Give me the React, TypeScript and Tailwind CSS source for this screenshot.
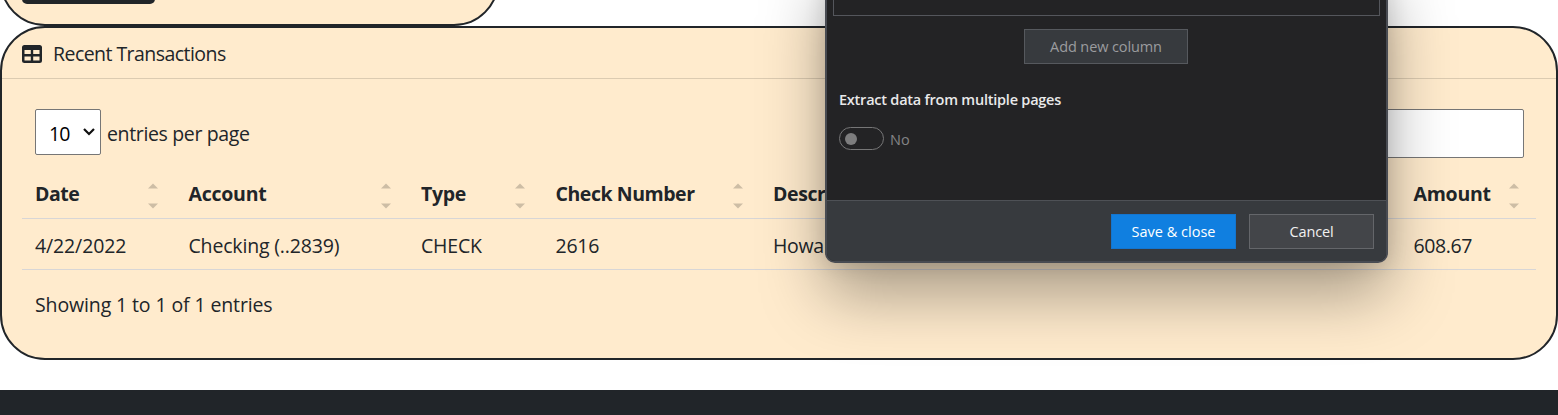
import React from 'react';

function SortIcon() {
  return (
    <svg width="10" height="26" viewBox="0 0 10 26" className="mt-[3px] shrink-0" fill="#cdbda5">
      <path d="M0 5.500 L5 0.500 L10 5.500 Z" />
      <path d="M0 20.500 L10 20.500 L5 25.500 Z" />
    </svg>
  );
}

const columns = [
  { title: 'Date', value: '4/22/2022', width: 'w-[153.5px]', cell: 'tracking-[-0.12px]', head: 'tracking-[-0.5px]' },
  { title: 'Account', value: 'Checking (..2839)', width: 'w-[232.5px]', cell: 'tracking-[-0.17px]', head: 'tracking-[-0.25px]' },
  { title: 'Type', value: 'CHECK', width: 'w-[134.5px]', cell: 'tracking-[-0.2px]', head: 'tracking-[-0.3px]' },
  { title: 'Check Number', value: '2616', width: 'w-[217.5px]', cell: 'tracking-[-0.25px]', head: 'tracking-[-0.45px]' },
  { title: 'Description', value: 'Howard', width: 'w-[640.5px]', cell: 'tracking-[-0.3px]', head: 'tracking-[-0.4px]' },
  { title: 'Amount', value: '608.67', width: 'w-[135.5px]', cell: 'tracking-[-0.4px]', head: 'tracking-[-0.25px]' },
];

function TransactionsTable() {
  return (
    <div className="mx-5 mt-[11px]">
      <div className="flex h-[50px] border-b border-[#d8d6d6] pt-px font-bold">
        {columns.map((c) => (
          <div key={c.title} className={`${c.width} flex shrink-0 items-center justify-between pr-[17.5px] pl-[13px]`}>
            <span className={c.head}>{c.title}</span>
            <SortIcon />
          </div>
        ))}
      </div>
      <div className="flex h-[51px] border-b border-[#d8d6d6] pt-[3px]">
        {columns.map((c) => (
          <div key={c.title} className={`${c.width} ${c.cell} flex shrink-0 items-center pl-[13px]`}>
            {c.value}
          </div>
        ))}
      </div>
    </div>
  );
}

function Dialog() {
  return (
    <section className="absolute -top-10 left-[825px] flex h-[303px] w-[563px] flex-col overflow-hidden rounded-[10px] border-2 border-[#484b52] bg-[#232325] font-['Open_Sans','Noto_Sans',sans-serif] text-[14.5px] shadow-[0_32px_64px_rgba(0,0,0,0.34),0_2px_21px_rgba(0,0,0,0.12)]">
      <div className="mx-[6px] h-[54px] shrink-0 border border-[#54565c]" />
      <button className="mt-[13px] ml-[197px] h-[35px] w-[164px] shrink-0 border border-[#56595e] bg-[#373a3e] tracking-[-0.1px] text-[#9b9c9e]">
        Add new column
      </button>
      <h3 className="mt-[26px] ml-3 leading-5 font-semibold tracking-[-0.23px] text-[#e9e9ea]">
        Extract data from multiple pages
      </h3>
      <div className="mt-4 ml-3 flex h-[25px] items-center gap-[6px] text-[#848485]">
        <span className="flex h-[23px] w-[45px] items-center rounded-full border border-[#767677] pl-[5px]">
          <span className="h-3 w-3 rounded-full bg-[#7d7d7e]" />
        </span>
        <span className="pt-[3px] leading-[22px]">No</span>
      </div>
      <footer className="mt-auto flex h-[61px] shrink-0 justify-end gap-[13px] border-t border-[#4e5156] bg-[#373a3e] pt-[13px] pr-3">
        <button className="h-[35px] w-[125px] border border-[#1475cf] bg-[#107fe0] text-white">Save &amp; close</button>
        <button className="h-[35px] w-[125px] border border-[#64666a] bg-[#434549] tracking-[-0.15px] text-[#f1f1f1]">Cancel</button>
      </footer>
    </section>
  );
}

export default function App() {
  return (
    <div className="relative flex h-[415px] w-full flex-col overflow-hidden bg-white font-['Open_Sans','Noto_Sans',sans-serif] text-[19.5px] text-[#212529]">
      <div className="-mt-[100px] flex h-[126px] w-[499px] shrink-0 items-end rounded-[45px] border-2 border-[#212529] bg-[#ffebcd] pb-5 pl-5">
        <div className="h-10 w-[133px] rounded-[5px] bg-[#212529]" />
      </div>
      <section className="h-[334px] shrink-0 overflow-hidden rounded-[45px] border-2 border-[#212529] bg-[#ffebcd]">
        <header className="flex h-[51px] items-center border-b border-[#dccbb1] pt-px pl-5">
          <svg width="20" height="18" viewBox="0 0 20 18" fillRule="evenodd" fill="#212529">
            <path d="M2.5 0h15A2.5 2.5 0 0 1 20 2.5v13a2.5 2.5 0 0 1-2.5 2.5h-15A2.5 2.5 0 0 1 0 15.500v-13A2.500 2.500 0 0 1 2.500 0ZM2.500 5v4h6.300V5ZM11.200 5v4h6.300V5ZM2.500 11.500v4h6.300v-4ZM11.200 11.500v4h6.300v-4Z" />
          </svg>
          <span className="ml-[11px] pt-px tracking-[-0.55px]">Recent Transactions</span>
        </header>
        <div className="flex items-start justify-between pt-[30px] pr-8 pl-[33px]">
          <div className="flex items-center">
            <div className="flex h-[46px] w-[66px] items-center rounded-[2px] border border-[#767676] bg-white pt-[4px] pl-[13px] tracking-[-0.8px] text-black">
              10
              <svg width="12" height="8" viewBox="0 0 12 8" className="mb-[5px] ml-[13px]" fill="none" stroke="#101010" strokeWidth="2.200">
                <path d="M1 1 L6 6 L11 1" />
              </svg>
            </div>
            <span className="ml-[6px] pt-[4px] tracking-[-0.35px]">entries per page</span>
          </div>
          <div className="h-[49px] w-[240px] rounded-[2px] border border-[#767676] bg-white" />
        </div>
        <TransactionsTable />
        <p className="mt-[20px] ml-[33px] leading-[30px] tracking-[-0.12px]">Showing 1 to 1 of 1 entries</p>
      </section>
      <footer className="mt-[30px] h-[25px] shrink-0 bg-[#212529]" />
      <Dialog />
    </div>
  );
}
